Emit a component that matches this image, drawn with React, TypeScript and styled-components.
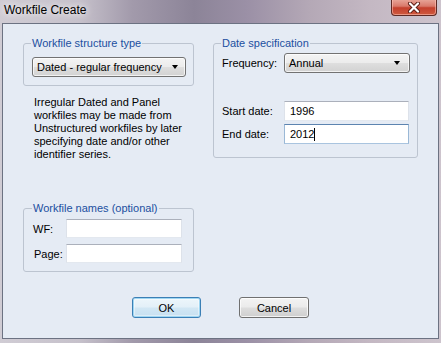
import React from "react";
import styled, { createGlobalStyle, css } from "styled-components";

const GlobalStyle = createGlobalStyle`
  html, body { margin: 0; padding: 0; overflow: hidden; background: #c8c3cc; }
  body { font-family: "Liberation Sans", Arial, sans-serif; font-size: 11px; color: #000; }
  * { box-sizing: border-box; }
`;

const Window = styled.div`
  width: 441px;
  height: 343px;
  display: flex;
  flex-direction: column;
  background: linear-gradient(
    90deg,
    #d0ccd4 0%,
    #c6c1cb 18%,
    #a29aab 30%,
    #8c8498 44%,
    #9b90a6 56%,
    #b4a8b6 70%,
    #c4b8c3 84%,
    #cdc4cd 100%
  );
`;

const TitleBar = styled.div`
  height: 23px;
  flex: none;
  display: flex;
  justify-content: space-between;
  align-items: flex-start;
  padding-left: 4px;
`;

const Title = styled.div`
  padding-top: 3px;
  font-size: 12px;
  line-height: 15px;
  color: #000;
  text-shadow: 0 0 6px rgba(255, 255, 255, 0.9), 0 0 10px rgba(255, 255, 255, 0.7);
`;

const CloseButton = styled.div`
  width: 46px;
  height: 17px;
  margin-right: 4px;
  margin-top: -1px;
  border: 1px solid #5e2a24;
  border-top: none;
  border-radius: 0 0 4px 4px;
  background: linear-gradient(180deg, #e9a99c 0%, #d9796a 45%, #c4402d 55%, #cf5a3e 100%);
  box-shadow: inset 0 0 0 1px rgba(255, 200, 190, 0.55);
  display: flex;
  align-items: center;
  justify-content: center;
`;

const Client = styled.div`
  flex: 1;
  margin: 0 2px 4px 2px;
  border: 1px solid #6c7282;
  background: #e5ebf4;
  display: flex;
  flex-direction: column;
  padding: 12px 0 20px 20px;
`;

const Columns = styled.div`
  display: grid;
  grid-template-columns: 171px 205px;
  column-gap: 19px;
  align-items: start;
`;

const Column = styled.div`
  display: flex;
  flex-direction: column;
`;

const Group = styled.fieldset<{ $pad: string; $mt?: number }>`
  margin: ${(p) => p.$mt ?? 0}px 0 0 0;
  padding: ${(p) => p.$pad};
  border: 1px solid #bcc4d0;
  border-radius: 3px;
  min-width: 0;
`;

const Legend = styled.legend`
  padding: 0 1px;
  margin-left: -1px;
  line-height: 14px;
  color: #1c4fa0;
`;

const comboFace = css`
  border: 1px solid #727272;
  border-radius: 3px;
  background: linear-gradient(180deg, #f4f4f4 0%, #ececec 48%, #dedede 52%, #d2d2d2 100%);
  box-shadow: inset 0 0 0 1px rgba(255, 255, 255, 0.7);
`;

const Combo = styled.div<{ $w: number; $arrowRight: number }>`
  ${comboFace};
  width: ${(p) => p.$w}px;
  height: 20px;
  display: flex;
  align-items: center;
  justify-content: space-between;
  padding: 0 ${(p) => p.$arrowRight}px 0 4px;
  line-height: 14px;
`;

const Arrow = styled.span`
  width: 0;
  height: 0;
  border-left: 3.5px solid transparent;
  border-right: 3.5px solid transparent;
  border-top: 4px solid #000;
`;

const Note = styled.p`
  margin: 10px 0 0 11px;
  line-height: 13px;
`;

const FieldGrid = styled.div<{ $label: number; $gap: number }>`
  display: grid;
  grid-template-columns: ${(p) => p.$label}px auto;
  row-gap: ${(p) => p.$gap}px;
  align-items: center;
`;

const Label = styled.span<{ $indent?: number }>`
  padding-left: ${(p) => p.$indent ?? 0}px;
  line-height: 14px;
`;

const TextBox = styled.div<{ $w: number; $h: number; $focused?: boolean }>`
  width: ${(p) => p.$w}px;
  height: ${(p) => p.$h}px;
  background: #fff;
  border: 1px solid;
  border-color: ${(p) =>
    p.$focused ? "#5d84b0 #9ab8d6 #a9c4df #9ab8d6" : "#abb0bb #dde2ea #e3e8ef #dde2ea"};
  display: flex;
  align-items: center;
  padding-left: 5px;
  line-height: 14px;
`;

const Caret = styled.span`
  display: inline-block;
  width: 1px;
  height: 13px;
  background: #000;
  margin-left: 0px;
`;

const Spacer = styled.div<{ $h: number }>`
  height: ${(p) => p.$h}px;
`;

const DateRows = styled(FieldGrid)``;

const Footer = styled.div`
  margin-top: auto;
  margin-left: -20px;
  display: flex;
  justify-content: center;
  gap: 38px;
  padding-left: 0px;
`;

const Button = styled.div<{ $w: number; $default?: boolean }>`
  width: ${(p) => p.$w}px;
  height: 21px;
  border: 1px solid ${(p) => (p.$default ? "#3b7fb5" : "#707070")};
  border-radius: 3px;
  background: ${(p) =>
    p.$default
      ? "linear-gradient(180deg, #edf6fb 0%, #e3f0f8 48%, #d2e7f4 52%, #c6e0f1 100%)"
      : "linear-gradient(180deg, #f3f3f3 0%, #ebebeb 48%, #dddddd 52%, #cfcfcf 100%)"};
  box-shadow: ${(p) =>
    p.$default
      ? "inset 0 0 0 1px #9fd6f2, inset 0 0 0 2px rgba(255,255,255,0.4)"
      : "inset 0 0 0 1px rgba(255,255,255,0.75)"};
  display: flex;
  align-items: center;
  justify-content: center;
  line-height: 14px;
`;

export default function App() {
  return (
    <>
      <GlobalStyle />
      <Window>
        <TitleBar>
          <Title>Workfile Create</Title>
          <CloseButton>
            <svg width="14" height="11" viewBox="0 0 14 11">
              <path d="M3 1.5 L11 9.5 M11 1.5 L3 9.5" stroke="#5a1c14" strokeWidth="4" strokeLinecap="round" />
              <path d="M3 1.5 L11 9.5 M11 1.5 L3 9.5" stroke="#ffffff" strokeWidth="2.2" strokeLinecap="round" />
            </svg>
          </CloseButton>
        </TitleBar>
        <Client>
          <Columns>
            <Column>
              <Group $pad="7px 7px 8px 8px">
                <Legend>Workfile structure type</Legend>
                <Combo $w={154} $arrowRight={7}>
                  <span>Dated - regular frequency</span>
                  <Arrow />
                </Combo>
              </Group>
              <Note>
                Irregular Dated and Panel
                <br />
                workfiles may be made from
                <br />
                Unstructured workfiles by later
                <br />
                specifying date and/or other
                <br />
                identifier series.
              </Note>
              <Group $pad="4px 11px 8px 9px" $mt={40}>
                <Legend>Workfile names (optional)</Legend>
                <FieldGrid $label={33} $gap={6}>
                  <Label>WF:</Label>
                  <TextBox $w={116} $h={19} />
                  <Label $indent={1}>Page:</Label>
                  <TextBox $w={116} $h={19} />
                </FieldGrid>
              </Group>
            </Column>
            <Column>
              <Group $pad="3px 7px 13px 8px">
                <Legend>Date specification</Legend>
                <FieldGrid $label={62} $gap={0}>
                  <Label>Frequency:</Label>
                  <Combo $w={126} $arrowRight={9}>
                    <span>Annual</span>
                    <Arrow />
                  </Combo>
                </FieldGrid>
                <Spacer $h={28} />
                <DateRows $label={62} $gap={3}>
                  <Label>Start date:</Label>
                  <TextBox $w={125} $h={20}>1996</TextBox>
                  <Label>End date:</Label>
                  <TextBox $w={125} $h={20} $focused>
                    2012
                    <Caret />
                  </TextBox>
                </DateRows>
              </Group>
            </Column>
          </Columns>
          <Footer>
            <Button $w={69} $default>
              OK
            </Button>
            <Button $w={70}>Cancel</Button>
          </Footer>
        </Client>
      </Window>
    </>
  );
}
